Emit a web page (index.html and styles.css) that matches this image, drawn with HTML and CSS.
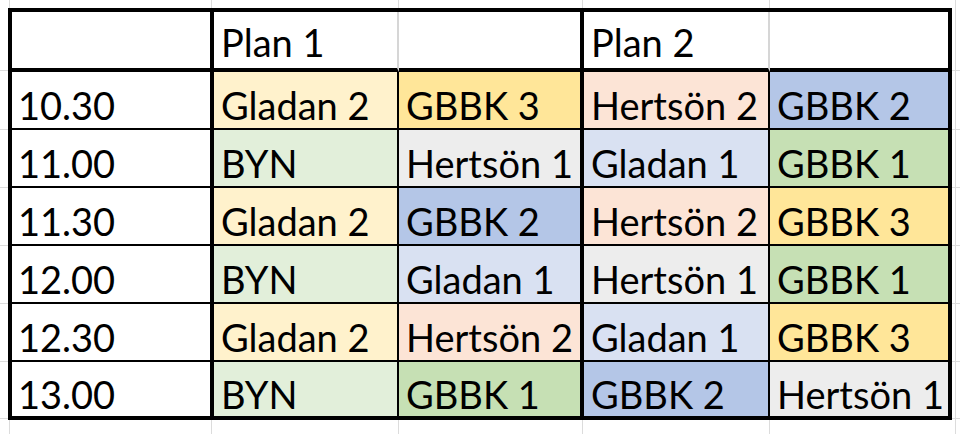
FILE: index.html
```html
<!DOCTYPE html>
<html lang="sv">
<head>
<meta charset="utf-8">
<title>Schema</title>
<link rel="stylesheet" href="styles.css">
</head>
<body>
<div class="sheet">
  <div class="cell head c1"></div>
  <div class="cell head c2 soft">Plan 1</div>
  <div class="cell head c3"></div>
  <div class="cell head c4 soft">Plan 2</div>
  <div class="cell head c5"></div>

  <div class="cell c1">10.30</div>
  <div class="cell c2 gladan2">Gladan 2</div>
  <div class="cell c3 gbbk3">GBBK 3</div>
  <div class="cell c4 hertson2">Hertsön 2</div>
  <div class="cell c5 gbbk2">GBBK 2</div>

  <div class="cell c1">11.00</div>
  <div class="cell c2 byn">BYN</div>
  <div class="cell c3 hertson1">Hertsön 1</div>
  <div class="cell c4 gladan1">Gladan 1</div>
  <div class="cell c5 gbbk1">GBBK 1</div>

  <div class="cell c1">11.30</div>
  <div class="cell c2 gladan2">Gladan 2</div>
  <div class="cell c3 gbbk2">GBBK 2</div>
  <div class="cell c4 hertson2">Hertsön 2</div>
  <div class="cell c5 gbbk3">GBBK 3</div>

  <div class="cell c1">12.00</div>
  <div class="cell c2 byn">BYN</div>
  <div class="cell c3 gladan1">Gladan 1</div>
  <div class="cell c4 hertson1">Hertsön 1</div>
  <div class="cell c5 gbbk1">GBBK 1</div>

  <div class="cell c1">12.30</div>
  <div class="cell c2 gladan2">Gladan 2</div>
  <div class="cell c3 hertson2">Hertsön 2</div>
  <div class="cell c4 gladan1">Gladan 1</div>
  <div class="cell c5 gbbk3">GBBK 3</div>

  <div class="cell c1 last">13.00</div>
  <div class="cell c2 byn last">BYN</div>
  <div class="cell c3 gbbk1 last">GBBK 1</div>
  <div class="cell c4 gbbk2 last">GBBK 2</div>
  <div class="cell c5 hertson1 last">Hertsön 1</div>
</div>
</body>
</html>
```

FILE: styles.css
```css
html {
  background-color: #ffffff;
  background-image:
    linear-gradient(to right,
      transparent 9px, #dcdcdc 9px, #dcdcdc 10px, transparent 10px,
      transparent 211px, #dcdcdc 211px, #dcdcdc 212px, transparent 212px,
      transparent 398px, #dcdcdc 398px, #dcdcdc 399px, transparent 399px,
      transparent 582px, #dcdcdc 582px, #dcdcdc 583px, transparent 583px,
      transparent 769px, #dcdcdc 769px, #dcdcdc 770px, transparent 770px,
      transparent 955px, #dcdcdc 955px, #dcdcdc 956px, transparent 956px),
    linear-gradient(to bottom,
      transparent 70px, #dcdcdc 70px, #dcdcdc 71px, transparent 71px,
      transparent 129px, #dcdcdc 129px, #dcdcdc 130px, transparent 130px,
      transparent 187px, #dcdcdc 187px, #dcdcdc 188px, transparent 188px,
      transparent 245px, #dcdcdc 245px, #dcdcdc 246px, transparent 246px,
      transparent 303px, #dcdcdc 303px, #dcdcdc 304px, transparent 304px,
      transparent 361px, #dcdcdc 361px, #dcdcdc 362px, transparent 362px,
      transparent 418px, #dcdcdc 418px, #dcdcdc 419px, transparent 419px);
  height: 100%;
}

body {
  margin: 0;
  padding: 8px;
  font-family: Lato, "Open Sans", sans-serif;
  color: #000000;
}

.sheet {
  display: grid;
  grid-template-columns: 202px 185px 185px 186px 182px;
  grid-template-rows: 60px repeat(6, 58px);
  border-left: 4px solid #000;
  border-top: 4px solid #000;
  box-sizing: border-box;
  width: max-content;
  background: #fff;
}

.cell {
  box-sizing: border-box;
  display: flex;
  align-items: flex-end;
  padding: 0 0 4px 7px;
  font-size: 38px;
  line-height: 1;
  white-space: nowrap;
  overflow: hidden;
  border-bottom: 2px solid #000;
  background: #fff;
}

.head {
  border-bottom: 4px solid #000;
  padding-bottom: 7px;
}

.last {
  border-bottom: 4px solid #000;
  padding-bottom: 3px;
}

.c1 { border-right: 4px solid #000; padding-left: 6px; }
.c2 { border-right: 2px solid #000; }
.c3 { border-right: 4px solid #000; }
.c4 { border-right: 2px solid #000; }
.c5 { border-right: 4px solid #000; }

.head.c2, .head.c4 { border-right: 2px solid #d6d6d6; }

.gladan2 { background: #fff2cc; }
.gbbk3 { background: #ffe699; }
.hertson2 { background: #fce4d6; }
.gbbk2 { background: #b4c6e7; }
.byn { background: #e2efda; }
.hertson1 { background: #ededed; }
.gladan1 { background: #d9e1f2; }
.gbbk1 { background: #c6e0b4; }
```
